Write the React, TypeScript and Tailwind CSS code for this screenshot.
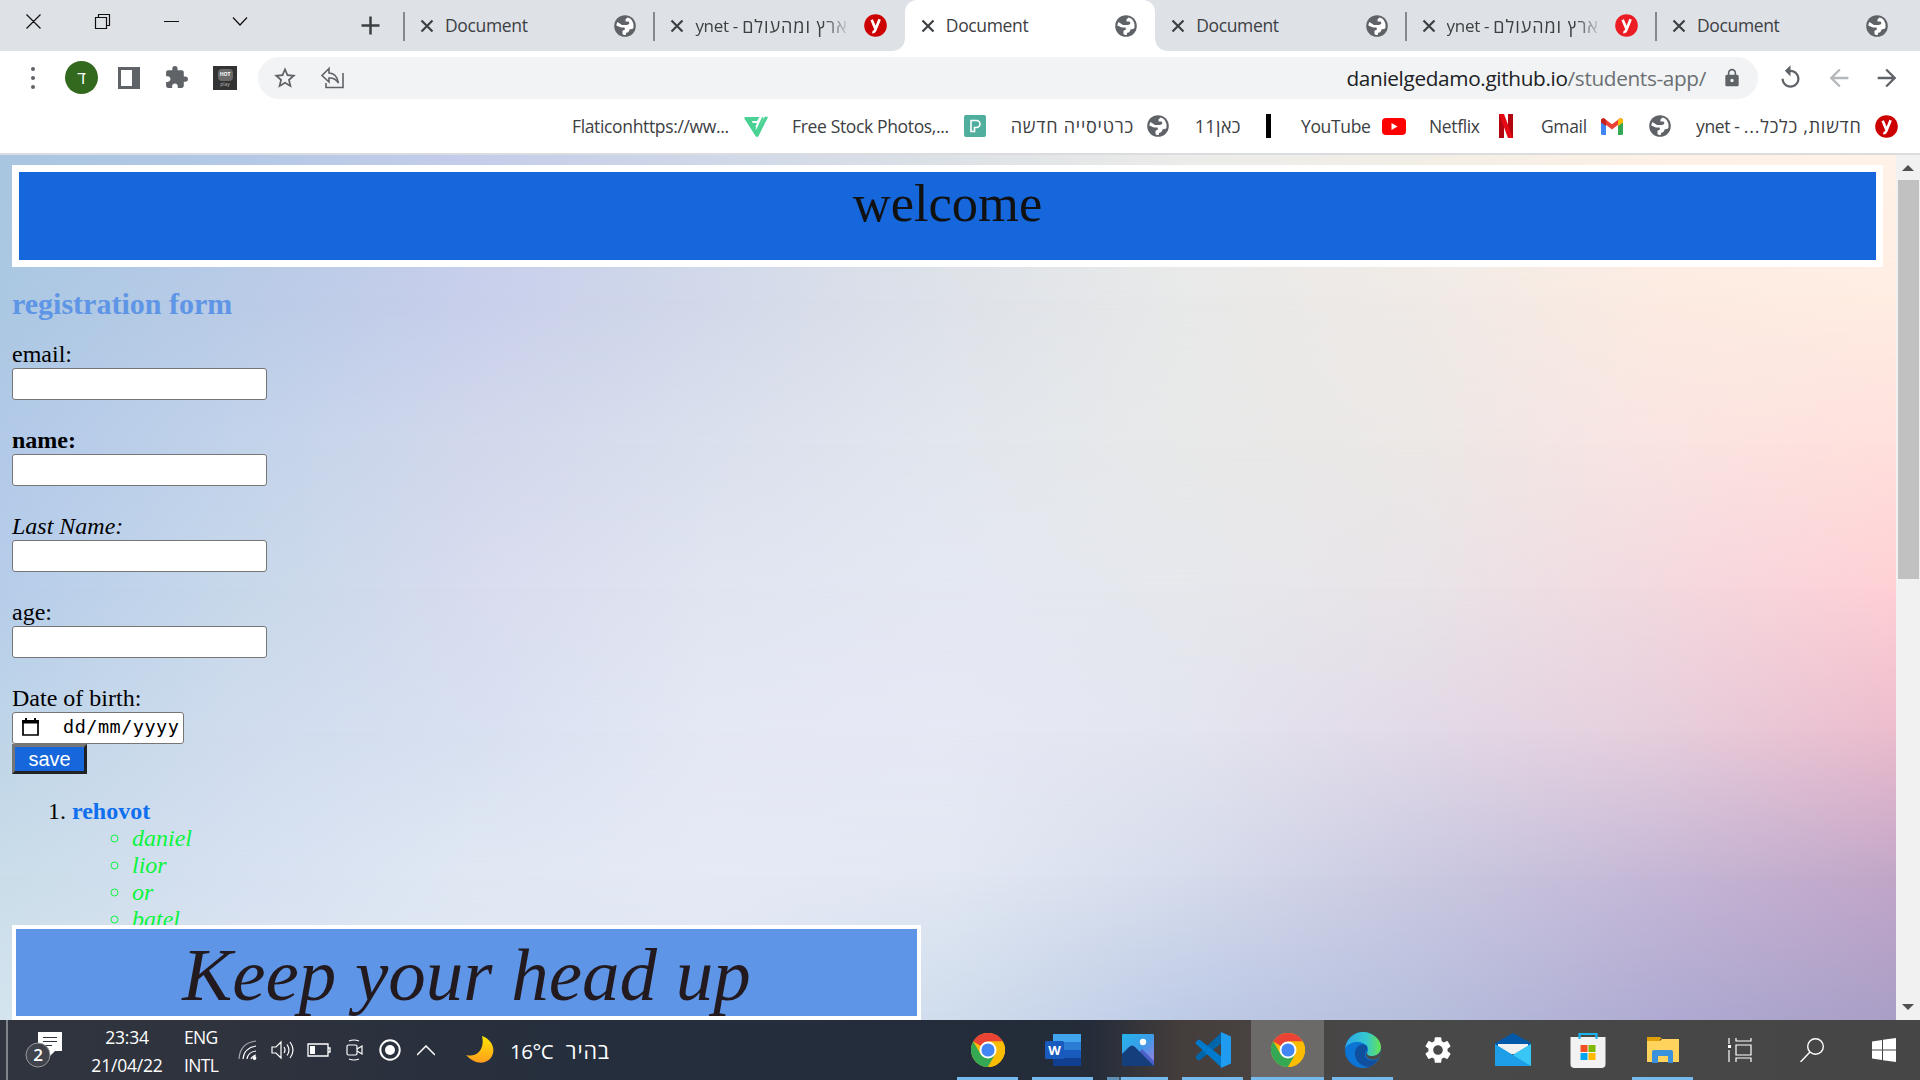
import React from "react";
import { MdStarOutline, MdExtension, MdLock, MdReplay, MdArrowBack, MdArrowForward, MdSettings } from "react-icons/md";

const cols = ["#a9c6e1 #b3c9e6 #c5cdea #d0d8e9 #dde2e6 #ececea #f3efe6 #fdf1e6 #fff2e8",
"#abc8e2 #b9cbe7 #c8cfeb #d2d9ea #dee2e9 #e8e9e9 #f0eae6 #fcebe2 #ffede2",
"#b2c9e8 #c2d3ea #d2d8ec #dae0ed #e2e7ee #e8e9e9 #ece8e6 #fae4e2 #ffe0dd",
"#b6cdea #c7d8ea #d8dcef #e0e5f1 #e4e8f2 #e6e8ed #e9e4e8 #f3d9df #ffd0d5",
"#bed5e8 #d0dcee #d8e0f1 #e4e8f4 #e6e9f4 #e3e5ef #e2d9e7 #e6cedc #ecbccd",
"#cadde9 #d6e0f1 #e0e8f3 #e5e9f5 #e2e8f3 #d6dcec #cac9e1 #c5b7d6 #c2a6c8",
"#d4e4ef #dde6f2 #e0e7f3 #dde6f2 #cfdcec #bdcae6 #b6bedc #afaad2 #a99ec6"];

function Backdrop() {
  const n = cols.length - 1;
  return (
    <div className="absolute inset-0">
      {cols.map((row, i) => {
        const mask = i === 0 ? undefined : `linear-gradient(to bottom, transparent ${((i - 1) / n) * 100}%, black ${(i / n) * 100}%)`;
        return <div key={i} className="absolute inset-0" style={{ background: `linear-gradient(to right, ${row.split(" ").join(", ")})`, maskImage: mask }} />;
      })}
    </div>
  );
}

const Globe = () => (
  <svg viewBox="0 0 22 22" className="size-[22px] shrink-0"><circle cx="11" cy="11" r="10.8" fill="#5f6368" /><path d="M13.500 2.600Q16.500 3.200 18 5.500q2 3 1.500 7-.5 1.500-2 1.500l-2 .5q-.5 3-3.500 3.500v1.800Q10 20.200 8.500 19.300v-3.500l2.500-1.300-.5-2H6.500L2.300 10.500Q2.500 8.500 3.500 7l4.500 3h4.500q2.500 0 3-2l-1-1.500h-3V4.500z" fill="#fff" /><path d="M2.300 11l4.200 1.500 1 2.500-1 2.500Q2.600 15.500 2.300 11z" fill="#5f6368" /></svg>
);

const Y = ({ c }: { c: string }) => (
  <svg viewBox="0 0 24 24" className="size-[23px] shrink-0"><circle cx="12" cy="12" r="11.8" fill={c} /><path d="M8 6l3.800 9M16.300 5.500l-4.600 11.500q-1 2.200-3 1.800" stroke="#fff" strokeWidth="2.800" fill="none" /></svg>
);

const X = () => (
  <svg viewBox="0 0 14 14" className="size-[14px] shrink-0"><path d="M1.500 1.500l11 11M12.500 1.500l-11 11" stroke="#3c4043" strokeWidth="2.200" /></svg>
);

function Tab({ ynet, active, line }: { ynet?: string; active?: boolean; line?: boolean }) {
  return (
    <div className={"relative flex h-[51px] w-[250.4px] shrink-0 items-center pl-[16px] pr-[18px] " + (active ? "rounded-t-[12px] bg-white" : "")}>
      {line && <span className="absolute left-[-1px] top-[12px] h-[29px] w-[2px] bg-[#85888c]" />}
      {active && <span className="absolute bottom-0 left-[-12px] size-[12px] bg-[radial-gradient(circle_at_0_0,transparent_11.5px,white_12px)]" />}
      {active && <span className="absolute bottom-0 right-[-12px] size-[12px] bg-[radial-gradient(circle_at_100%_0,transparent_11.5px,white_12px)]" />}
      <X />
      {ynet ? (
        <span className="ml-[11px] flex w-[155px] items-center overflow-hidden whitespace-pre text-[17px] tracking-[-0.3px] [mask-image:linear-gradient(to_right,black_128px,transparent_156px)]"><span>ynet - </span><bdi dir="rtl" className="text-[18px] leading-[24px] tracking-[0.95px]">ארץ ומהעולם</bdi></span>
      ) : (
        <span className="ml-[11px] text-[17.5px] tracking-[-0.35px]">Document</span>
      )}
      <span className="ml-auto">{ynet ? <Y c={ynet} /> : <Globe />}</span>
    </div>
  );
}

function Toolbar() {
  return (
    <div className="flex h-[53px] items-center text-[#5f6368]">
      <div className="ml-[31px] flex flex-col gap-[5px]"><i className="size-1 rounded-full bg-[#5f6368]" /><i className="size-1 rounded-full bg-[#5f6368]" /><i className="size-1 rounded-full bg-[#5f6368]" /></div>
      <div className="ml-[30px] flex size-[33px] items-center justify-center rounded-full bg-[#33691e] text-[17px] text-white">ד</div>
      <div className="ml-[20px] h-[22px] w-[22px] border-[3px] border-r-[8px] border-[#5f6368]" />
      <MdExtension className="ml-[24px] size-[25px]" />
      <div className="ml-[24px] flex size-[24px] flex-col items-center bg-[#333] pt-[3px]">
        <div className="flex h-[12px] w-[15px] items-center justify-center rounded-[4px] bg-[#6a6a6a] text-[5px] font-bold text-white">HOT</div>
        <div className="text-[5px] leading-[6px] text-[#bbb]">play</div>
      </div>
      <div className="ml-[21px] flex h-[42px] w-[1500px] items-center rounded-full bg-[#f1f3f4] pl-[14px] pr-[16px]">
        <MdStarOutline className="size-[26px]" />
        <svg viewBox="0 0 24 24" className="ml-[22px] size-[24px]" fill="none" stroke="currentColor" strokeWidth="1.6"><path d="M9 2.5L2 9.5l7 6.5v-4q6-.5 9.500 5Q17 7.500 9 7V2.500zM6 17v4.500h17V7" /></svg>
        <span className="ml-auto pt-[2px] text-[20.750px] tracking-[-0.340px] text-[#6b6f73]"><span className="text-[#202124]">danielgedamo.github.io</span>/students-app/</span>
        <MdLock className="ml-[16px] size-[20px]" />
      </div>
      <MdReplay className="ml-[19px] size-[27px]" />
      <MdArrowBack className="ml-[21px] size-[28px] text-[#b4b7ba]" />
      <MdArrowForward className="ml-[20px] size-[28px]" />
    </div>
  );
}

const Netflix = () => <svg viewBox="0 0 14 24" className="h-[24px] w-[14px]"><path d="M0 0h5v24H0zM9 0h5v24H9z" fill="#b1060f" /><path d="M0 0h5l9 24H9z" fill="#e50914" /></svg>;
const Gmail = () => <svg viewBox="0 0 22 17" className="h-[17px] w-[22px]"><path d="M0 2h5v15H1.500Q0 17 0 15.500z" fill="#4285f4" /><path d="M17 2h5v13.500q0 1.500-1.500 1.500H17z" fill="#34a853" /><path d="M0 3Q0 0 3 .3L11 6.300 19 .3Q22 0 22 3L11 11.500z" fill="#ea4335" /><path d="M17 2l2-1.700Q22 0 22 3v1.500l-5 3.600z" fill="#fbbc04" /><path d="M0 3Q0 0 3 .3L5 2v6L0 4.500z" fill="#c5221f" /></svg>;
const YouTube = () => <svg viewBox="0 0 24 17" className="h-[17px] w-[24px]"><rect width="24" height="17" rx="4" fill="#f00" /><path d="M9.500 5l6 3.500-6 3.500z" fill="#fff" /></svg>;

function Bookmarks() {
  return (
    <div className="flex h-[49px] items-center whitespace-pre pl-[572px] pb-[5px] text-[17.500px] tracking-[-0.35px] *:shrink-0">
      <span className="w-[160px]">Flaticonhttps://ww...</span>
      <svg viewBox="0 0 24 22" className="ml-[12px] h-[22px] w-[24px]"><path d="M2 2h13.500L13 6H8.500l1 2H13l-1.500 3.500 2 4L21 1.500l3 .5-9.500 19q-1.500 2-3 0L.3 3.500Q0 2 2 2z" fill="#4ad295" /><path d="M18 1l-6 13.500M13.500 6.800H8" stroke="#fff" strokeWidth="1.200" fill="none" /><path d="M19 2.500l-6.500 14" stroke="#4ad295" strokeWidth="2" /></svg>
      <span className="ml-[24px] w-[158px]">Free Stock Photos,...</span>
      <svg viewBox="0 0 22 22" className="ml-[14px] size-[22px]"><rect width="22" height="22" rx="2" fill="#50ae9f" /><path d="M7 16.500v-11h5.500a3.500 3.500 0 010 7H10.500v4z" stroke="#fff" strokeWidth="1.600" fill="none" /></svg>
      <bdi dir="rtl" className="ml-[25px] w-[123px] text-[18px] tracking-[0.78px]">כרטיסייה חדשה</bdi>
      <span className="ml-[13px]"><Globe /></span>
      <bdi dir="rtl" className="ml-[26px] w-[46px] text-[18px] tracking-[0.4px]">כאן11</bdi>
      <i className="ml-[25px] h-[24px] w-[5px] bg-black" />
      <span className="ml-[30px] w-[69px]">YouTube</span>
      <span className="ml-[12px]"><YouTube /></span>
      <span className="ml-[23px] w-[52px]">Netflix</span>
      <span className="ml-[18px]"><Netflix /></span>
      <span className="ml-[28px] w-[46px]">Gmail</span>
      <span className="ml-[14px]"><Gmail /></span>
      <span className="ml-[26px]"><Globe /></span>
      <span className="ml-[25px] flex w-[166px] items-center"><span>ynet - </span><bdi dir="rtl" className="text-[18px] tracking-[0.72px]">חדשות, כלכל...</bdi></span>
      <span className="ml-[13px]"><Y c="#c00" /></span>
    </div>
  );
}

function Field({ label, cls = "" }: { label: string; cls?: string }) {
  return (
    <div className="mb-[27px]">
      <div className={"h-[27px] leading-[27px] " + cls}>{label}</div>
      <input className="block h-[32px] w-[255px] rounded-[3px] border border-[#767676] bg-white" />
    </div>
  );
}

function PageBody() {
  return (
    <div className="relative h-[865px] w-[1896px] overflow-hidden pl-[12px] pt-[10px] font-['Liberation_Serif',serif] text-[24px] text-black">
      <Backdrop />
      <div className="relative">
        <div className="h-[102px] w-[1871px] border-[7px] border-white bg-[#1667db] text-center text-[52.500px] leading-[63px] text-[#111]">welcome</div>
        <h3 className="mt-[20px] h-[34px] text-[30px] font-bold leading-[34px] text-[#5e95e6]">registration form</h3>
        <form className="mt-[20px]">
          <Field label="email:" />
          <Field label="name:" cls="font-bold" />
          <Field label="Last Name:" cls="italic" />
          <Field label="age:" />
          <div className="h-[27px] leading-[27px]">Date of birth:</div>
          <div className="flex h-[32px] w-[172px] items-center rounded-[3px] border border-[#767676] bg-white pl-[9px] font-['DejaVu_Sans_Mono',monospace] text-[18.500px]">
            <svg viewBox="0 0 17 18" className="mt-[-3px] h-[18px] w-[17px]"><path d="M1 3h15v14H1z" fill="none" stroke="#000" strokeWidth="1.700" /><path d="M0 2h17v3.500H0zM3 0h2v3H3zM12 0h2v3h-2z" /></svg>
            <span className="ml-[24px] mt-[-2px] tracking-[0.500px]">dd/mm/yyyy</span>
          </div>
          <div className="h-[30px] w-[75px] border-[3px] border-b-[#222] border-l-[#767676] border-r-[#222] border-t-[#767676] bg-[#1667db] text-center font-['Liberation_Sans',sans-serif] text-[20px] leading-[24px] text-white">save</div>
        </form>
        <ol className="mt-[24px] list-decimal pl-[60px] leading-[27px]">
          <li><b className="text-[#0f6fef]">rehovot</b>
            <ul className="list-[circle] pl-[60px] text-[#0bf53d]"><li><i>daniel</i></li><li><i>lior</i></li><li><i>or</i></li><li><i>batel</i></li></ul>
          </li>
        </ol>
      </div>
      <div className="absolute bottom-0 left-[12px] h-[95px] w-[909px] border-4 border-white bg-[#5e95e6] text-center text-[75px] italic leading-[91px] text-[#221a1e]">Keep your head up</div>
    </div>
  );
}

const Chrome = () => <svg viewBox="0 0 48 48" className="size-[34px]"><circle cx="24" cy="24" r="24" fill="#fbbc04" /><path d="M3.200 12A24 24 0 0144.800 12H24L34 30z" fill="#ea4335" /><path d="M3.200 12A24 24 0 0024 48L34.400 30 13.600 30z" fill="#34a853" /><path d="M44.800 12A24 24 0 0124 48l10.400-18L24 12z" fill="#fbbc04" /><circle cx="24" cy="24" r="12" fill="#fff" /><circle cx="24" cy="24" r="9.300" fill="#4285f4" /></svg>;
const Word = () => <svg viewBox="0 0 36 34" className="h-[34px] w-[36px]"><path d="M8 1h28v8H8z" fill="#41a5ee" /><path d="M8 9h28v8H8z" fill="#2b7cd3" /><path d="M8 17h28v8H8z" fill="#185abd" /><path d="M8 25h28v8H8z" fill="#103f91" /><rect y="8" width="19" height="18" rx="1.500" fill="#185abd" /><text x="9.500" y="21.500" textAnchor="middle" fontSize="13" fontWeight="bold" fill="#fff" fontFamily="Open Sans">W</text></svg>;
const Photos = () => <svg viewBox="0 0 32 32" className="size-[32px]"><defs><linearGradient id="ph" x1="0" y1="0" x2="1" y2="1"><stop stopColor="#23b5ea" /><stop offset=".5" stopColor="#3d9be8" /><stop offset="1" stopColor="#a57ae0" /></linearGradient></defs><rect width="32" height="32" rx="1" fill="url(#ph)" /><path d="M16 20l4-5 12 12v5H16z" fill="#4a5fc8" /><path d="M0 20l7-7q3-3 6 0l19 19H0z" fill="#153f7c" /><circle cx="21" cy="8" r="3.200" fill="#fff" /></svg>;
const VSCode = () => <svg viewBox="0 0 36 36" className="size-[36px]"><path d="M27 0L1 24q-1 1 0 2l2 2q1 1 2 0L27 11z" fill="#0065a9" /><path d="M27 36L1 12q-1-1 0-2l2-2q1-1 2 0L27 25z" fill="#007acc" /><path d="M26 0l10 4.500v27L26 36z" fill="#1f9cf0" /></svg>;
const Edge = () => <svg viewBox="0 0 36 36" className="size-[36px]"><defs><linearGradient id="eg"><stop stopColor="#2aa5e8" /><stop offset=".6" stopColor="#35c8cf" /><stop offset="1" stopColor="#66e34e" /></linearGradient></defs><circle cx="18" cy="18" r="18" fill="#0c74d4" /><path d="M0 17C1 7 9 0 18 0s18 7 18 15c0 6-4 9-9 9-4 0-6-1.500-4.500-4C25 15 19 9 11 10 5 10.500 1 14 0 17z" fill="url(#eg)" /><path d="M22 14c-6-4-13 1-12 9 1 7 7 12 14 12 5-2 8-6 9-8-5 3-14 1-13-5 0-3 3-4 2-8z" fill="#104f9e" /><path d="M36.500 14v10l-3.500 2.500c-5 2-12 1-12.500-5 0 2 3 3.500 7 3.500 4 0 8-3 8.500-7z" fill="#4a4a4a" opacity="0" /><path d="M22.500 20c-1.500 2.500.5 4 4.500 4 4 0 7.500-2 8.700-5.500L36 21l-2.500 5.500c-5 2.500-13 1-12.700-5z" fill="#4a4a4a" /></svg>;
const Mail = () => <svg viewBox="0 0 36 34" className="h-[34px] w-[36px]"><path d="M0 10L18 0l18 10v4H0z" fill="#0359a8" /><path d="M3 11h30v10H3z" fill="#f1f1f1" /><path d="M0 11l18 11L36 11v22H0z" fill="#1f9ee8" /><path d="M36 11L18 22l18 11z" fill="#38c7f4" /></svg>;
const Store = () => <svg viewBox="0 0 36 36" className="size-[36px]"><path d="M.5 5h35v27q0 4-4 4h-27q-4 0-4-4z" fill="#f2f2f2" /><path d="M9.500 7V2h17v5" stroke="#1ab5f0" strokeWidth="2.200" fill="none" /><path d="M10.500 13h7v7h-7z" fill="#f25022" /><path d="M18.500 13h7v7h-7z" fill="#7fba00" /><path d="M10.500 21h7v7h-7z" fill="#00a4ef" /><path d="M18.500 21h7v7h-7z" fill="#ffb900" /></svg>;
const Folder = () => <svg viewBox="0 0 32 28" className="h-[28px] w-[32px]"><path d="M0 1h13l2 2h-2v4H0z" fill="#e0a009" /><path d="M0 5h13l2-2h17v23H0z" fill="#ffd35c" /><path d="M5 27V16q0-2 2-2h17q2 0 2 2v11h-5v-7H11v7z" fill="#3a92dc" /></svg>;
const Settings = () => <MdSettings className="size-[32px] text-white" />;
const TaskView = () => <svg viewBox="0 0 24 24" className="size-[24px]" fill="none" stroke="#fff" strokeWidth="1.200"><path d="M1 0v6M1 12v12M8 0v3h15V0M8 24v-4h15v4M8 7h15v10H8z" /><path d="M0 7h3v3H0z" fill="#fff" stroke="none" /></svg>;
const Search = () => <svg viewBox="0 0 24 24" className="size-[24px]" fill="none" stroke="#fff" strokeWidth="1.400"><circle cx="15.500" cy="8.500" r="7.800" /><path d="M10 14L.5 24" /></svg>;
const Win = () => <svg viewBox="0 0 24 24" className="size-[24px]" fill="#fff"><path d="M0 3.400L10 2v9.500H0zM11 1.800L24 0v11.500H11zM0 12.500h10V22L0 20.600zM11 12.500h13V24L11 22.200z" /></svg>;

const apps: [React.ComponentType, boolean][] = [[Chrome, true], [Word, true], [Photos, true], [VSCode, true], [Chrome, true], [Edge, true], [Settings, false], [Mail, false], [Store, false], [Folder, true]];

function Taskbar() {
  return (
    <div className="flex h-[60px] items-center bg-[linear-gradient(to_right,#30343e_0,#2f333d_200px,#252e3d_600px,#242c3a_1090px,#443d3b_1180px,#484241_1250px,#484848_1380px,#464646)] text-white">
      <i className="ml-[6px] h-[60px] w-[2px] bg-[#80838a]" />
      <svg viewBox="0 0 38 38" className="ml-[17px] h-[38px] w-[38px]"><path d="M13 1h24v19H30l-5 5-4-5h-8z" fill="#fff" /><path d="M18 6.500h14M18 10.500h14M18 14.500h9" stroke="#30343e" strokeWidth="1.200" /><circle cx="13" cy="24" r="12" fill="#41444c" stroke="#999" strokeWidth="1" /><text x="13" y="30" textAnchor="middle" fontSize="17" fontWeight="600" fill="#fff" fontFamily="Open Sans">2</text></svg>
      <div className="ml-[25px] w-[78px] whitespace-nowrap pt-[1px] text-center text-[17.500px] leading-[28px] tracking-[-0.200px]"><div>23:34</div><div>21/04/22</div></div>
      <div className="ml-[18px] w-[38px] pt-[1px] text-[17.500px] leading-[28px] tracking-[-0.650px]"><div>ENG</div><div>INTL</div></div>
      <svg viewBox="0 0 20 20" className="ml-[16px] size-[20px]" fill="none" stroke="#fff" strokeWidth="1.200"><path d="M1 19Q2 3 18 1" opacity=".6" /><path d="M5 19q1-11 13-13M9 19q1-7 9-8M13 19q1-3 5-4" /><circle cx="16.500" cy="18" r="1.300" fill="#fff" /></svg>
      <svg viewBox="0 0 24 20" className="ml-[13px] h-[20px] w-[24px]" fill="none" stroke="#fff" strokeWidth="1.200"><path d="M1 7h4l5-5v16l-5-5H1zM13 7q2 3 0 6M16 4.500q4 5.500 0 11M19 2q6 8 0 16" /></svg>
      <svg viewBox="0 0 24 14" className="ml-[12px] h-[14px] w-[24px]"><path d="M1 1h20v12H1zM21 5h2v4h-2" fill="none" stroke="#fff" strokeWidth="1.300" /><path d="M3 3h5v8H3z" fill="#fff" /></svg>
      <svg viewBox="0 0 18 22" className="ml-[15px] h-[22px] w-[18px]" fill="none" stroke="#fff" strokeWidth="1.200"><rect x="1" y="6" width="10" height="10" rx="1.500" /><path d="M11 10l5-3v8l-5-3M3 2q5-2 10 0M3 20q5 2 10 0" /></svg>
      <svg viewBox="0 0 22 22" className="ml-[15px] size-[22px]"><circle cx="11" cy="11" r="9.700" fill="none" stroke="#fff" strokeWidth="2" /><circle cx="11" cy="11" r="5" fill="#fff" /></svg>
      <svg viewBox="0 0 18 11" className="ml-[16px] h-[11px] w-[18px]"><path d="M0 10L9 1l9 9" fill="none" stroke="#fff" strokeWidth="1.500" /></svg>
      <svg viewBox="0 0 28 28" className="ml-[31px] size-[28px]"><defs><linearGradient id="mo" x1="0" y1="0" x2="0" y2="1"><stop stopColor="#ffe600" /><stop offset="1" stopColor="#ff9d1e" /></linearGradient></defs><path d="M16 0C25 3 30 12 26 20S10 30 0 19C12 22 19 12 16 0z" fill="url(#mo)" /></svg>
      <span className="ml-[16px] w-[44px] whitespace-nowrap pt-[3px] text-[20.500px] tracking-[-0.500px]">16°C</span>
      <bdi dir="rtl" className="ml-[12px] w-[44px] whitespace-nowrap pt-[3px] text-[21.500px] tracking-[0.900px]">בהיר</bdi>
      <div className="ml-auto flex h-[60px]">
        {apps.map(([Icon, run], i) => (
          <div key={i} className={"relative flex h-[60px] items-center justify-center " + (i === 4 ? "mx-px w-[73px] bg-[#6b6a69]" : "w-[75px]")}>
            <Icon />
            {run && <i className={"absolute bottom-0 h-[3px] bg-[#76b9ed] " + (i === 4 ? "inset-x-0" : "inset-x-[7px]")} />}
            {i === 2 && <i className="absolute bottom-0 left-[7px] h-[3px] w-[14px] border-r-2 border-[#41566b] bg-[#5f8fb5]" />}
          </div>
        ))}
        <div className="flex w-[220px] items-center gap-[48px] pl-[28px]"><TaskView /><Search /><Win /></div>
      </div>
    </div>
  );
}

export default function App() {
  return (
    <div className="flex h-[1080px] w-[1920px] flex-col overflow-hidden bg-white font-['Open_Sans','Noto_Sans',sans-serif] text-[#3c4043]">
      <div className="flex h-[51px] shrink-0 bg-[#dee1e6]">
        <svg viewBox="0 0 404 51" className="h-[51px] w-[404px] shrink-0" fill="none" stroke="#111" strokeWidth="1.200"><path d="M26.500 14.500l14 14M40.500 14.500l-14 14M95.500 17.500h11v11h-11zM98.500 17v-2.500h11v11H107M164 21.500h15M233 17.500l7 7.500 7-7.500" /><path d="M361.500 25.500h18M370.500 16.500v18" stroke="#3c4043" strokeWidth="2.500" /></svg>
        <Tab line /><Tab ynet="#c00" line /><Tab active /><Tab /><Tab ynet="#ec1c24" line /><Tab line />
      </div>
      <Toolbar />
      <Bookmarks />
      <div className="h-[2px] shrink-0 bg-[#dadce0]" />
      <div className="flex h-[865px] shrink-0">
        <PageBody />
        <div className="flex w-[24px] flex-col items-center bg-[#f1f1f1] py-[10px]">
          <i className="size-0 border-x-[6px] border-b-[6px] border-x-transparent border-b-[#505050]" />
          <i className="mt-[9px] h-[399px] w-[21px] bg-[#c1c1c1]" />
          <i className="mt-auto size-0 border-x-[6px] border-t-[6px] border-x-transparent border-t-[#505050]" />
        </div>
      </div>
      <Taskbar />
    </div>
  );
}
